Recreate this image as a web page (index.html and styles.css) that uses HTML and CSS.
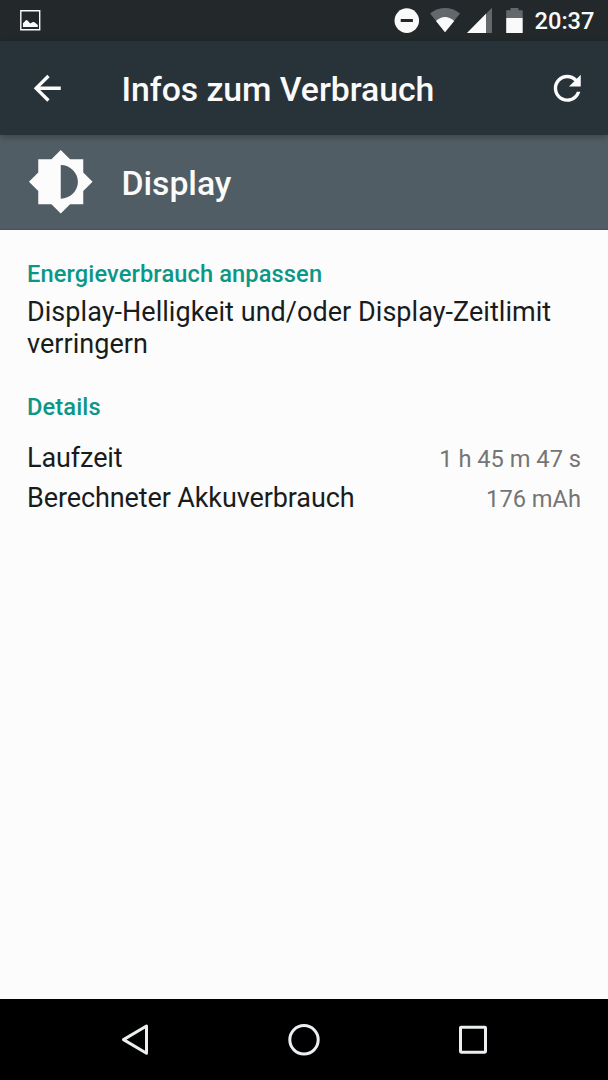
FILE: index.html
```html
<!DOCTYPE html>
<html lang="de">
<head>
<meta charset="utf-8">
<title>Infos zum Verbrauch</title>
<link rel="stylesheet" href="styles.css">
</head>
<body>
<div class="screen">
  <div class="status-bar">
    <svg class="status-picture" width="21" height="21" viewBox="0 0 21 21"><path d="M.8.8h18.9v18.9H.8z" fill="none" stroke="#fafafa" stroke-width="1.4"/><path d="M3 17v-3.8l3.2-3.1 1.3.3 2.8 3 2.5-1.3 1.8.2L17.8 15v2z" fill="#fafafa"/></svg>
    <svg class="status-icons" width="136" height="41" viewBox="0 0 136 41">
      <circle cx="12.8" cy="20.6" r="12.3" fill="#fafafa"/>
      <path d="M6.7 19h12.2v3H6.7z" fill="#23282b"/>
      <path d="M51 32.2 36.1 13.4Q51 2.6 66 13.4z" fill="#62686b"/>
      <path d="M51 32.2 42 20.9Q51 13.2 60.2 20.9z" fill="#fafafa"/>
      <path d="M98 7.7V33H73z" fill="#62686b"/>
      <path d="M92 13.8V33H73z" fill="#fafafa"/>
      <path d="M112.2 10.2h4.3V8h8v2.2h4.2V18h-16.5z" fill="#62686b"/>
      <path d="M112.2 18h16.5v15h-16.5z" fill="#fafafa"/>
    </svg>
    <span class="clock">20:37</span>
  </div>
  <header class="app-bar">
    <svg class="back" viewBox="0 0 24 24"><path d="M20 11H7.83l5.59-5.59L12 4l-8 8 8 8 1.41-1.41L7.83 13H20z"/></svg>
    <h1 class="title">Infos zum Verbrauch</h1>
    <svg class="refresh" viewBox="0 0 24 24"><path d="M17.65 6.35C16.2 4.9 14.21 4 12 4c-4.42 0-7.99 3.58-7.99 8s3.57 8 7.99 8c3.73 0 6.84-2.55 7.73-6h-2.08c-.82 2.33-3.04 4-5.65 4-3.31 0-6-2.69-6-6s2.69-6 6-6c1.66 0 3.14.69 4.22 1.78L13 11h7V4z"/></svg>
  </header>
  <div class="entry">
    <svg class="entry-icon" viewBox="0 0 24 24"><path d="M20 15.31 23.31 12 20 8.69V4h-4.69L12 .69 8.69 4H4v4.69L.69 12 4 15.31V20h4.69L12 23.31 15.31 20H20zM12 18V6c3.31 0 6.1 2.69 6.1 6s-2.79 6-6.1 6z"/></svg>
    <h2 class="title">Display</h2>
  </div>
  <main class="content">
    <h3 class="section">Energieverbrauch anpassen</h3>
    <p class="tip">Display-Helligkeit und/oder Display-Zeitlimit verringern</p>
    <h3 class="section">Details</h3>
    <div class="details">
      <div class="row"><span class="label">Laufzeit</span><span class="value">1 h 45 m 47 s</span></div>
      <div class="row"><span class="label">Berechneter Akkuverbrauch</span><span class="value">176 mAh</span></div>
    </div>
  </main>
  <nav class="nav-bar">
    <svg width="34" height="34" viewBox="0 0 34 34"><path d="M28.5 3v27.2L5.5 16.6z"/></svg>
    <svg width="34" height="34" viewBox="0 0 34 34"><circle cx="17" cy="16.8" r="14.2"/></svg>
    <svg width="34" height="34" viewBox="0 0 34 34"><rect x="4.5" y="4.2" width="25" height="25" rx=".6"/></svg>
  </nav>
</div>
</body>
</html>
```
FILE: styles.css
```css
* {
  box-sizing: border-box;
}

body,
h1,
h2,
h3,
p {
  margin: 0;
}

body {
  font-family: Roboto, "Noto Sans", sans-serif;
  color: #191c1d;
}

.screen {
  display: flex;
  flex-direction: column;
  width: 608px;
  height: 1080px;
  background: #fcfcfc;
}

.status-bar {
  display: flex;
  align-items: center;
  height: 41px;
  padding: 0 13.5px 0 20px;
  background: #23282b;
  color: #fafafa;
}

.status-icons {
  margin-left: auto;
}

.clock {
  margin-left: 5px;
  padding-top: 2px;
  font-size: 23.65px;
  font-weight: 500;
  line-height: 39px;
}

.app-bar {
  display: flex;
  align-items: center;
  height: 94px;
  padding: 0 20.5px 0 27px;
  background: #283339;
  z-index: 1;
  box-shadow: 0 2px 6px rgba(0, 0, 0, .28);
}

.back,
.refresh {
  width: 40.5px;
  height: 40.5px;
  fill: #fcfcfc;
}

.title {
  margin-left: 54px;
  padding-top: 3px;
  font-size: 33.8px;
  font-weight: 500;
  line-height: 40px;
  letter-spacing: -.06px;
  color: #fafafa;
}

.refresh {
  margin-left: auto;
}

.entry {
  display: flex;
  align-items: center;
  height: 95px;
  padding-left: 27px;
  background: #505d64;
  border-bottom: 1px solid #46535a;
}

.entry .title {
  margin-left: 27px;
}

.entry-icon {
  width: 67.5px;
  height: 67.5px;
  fill: #fcfcfc;
}

.content {
  flex: 1;
  padding: 30px 27px 0;
}

.section {
  font-size: 23.65px;
  font-weight: 500;
  line-height: 28px;
  letter-spacing: .11px;
  color: #0b9788;
}

.tip {
  margin: 8px 0 33px;
  font-size: 27px;
  line-height: 32px;
  letter-spacing: .04px;
}

.details {
  margin-top: 17px;
}

.row {
  display: flex;
  align-items: baseline;
  justify-content: space-between;
  height: 40px;
  font-size: 27px;
  line-height: 40px;
}

.label {
  letter-spacing: -.11px;
}

.value {
  font-size: 23.65px;
  color: #737576;
}

.nav-bar {
  display: flex;
  align-items: center;
  justify-content: center;
  gap: 135px;
  height: 81px;
  background: #000;
}

.nav-bar svg {
  fill: none;
  stroke: #eceff1;
  stroke-width: 3;
  stroke-linejoin: round;
}
```
